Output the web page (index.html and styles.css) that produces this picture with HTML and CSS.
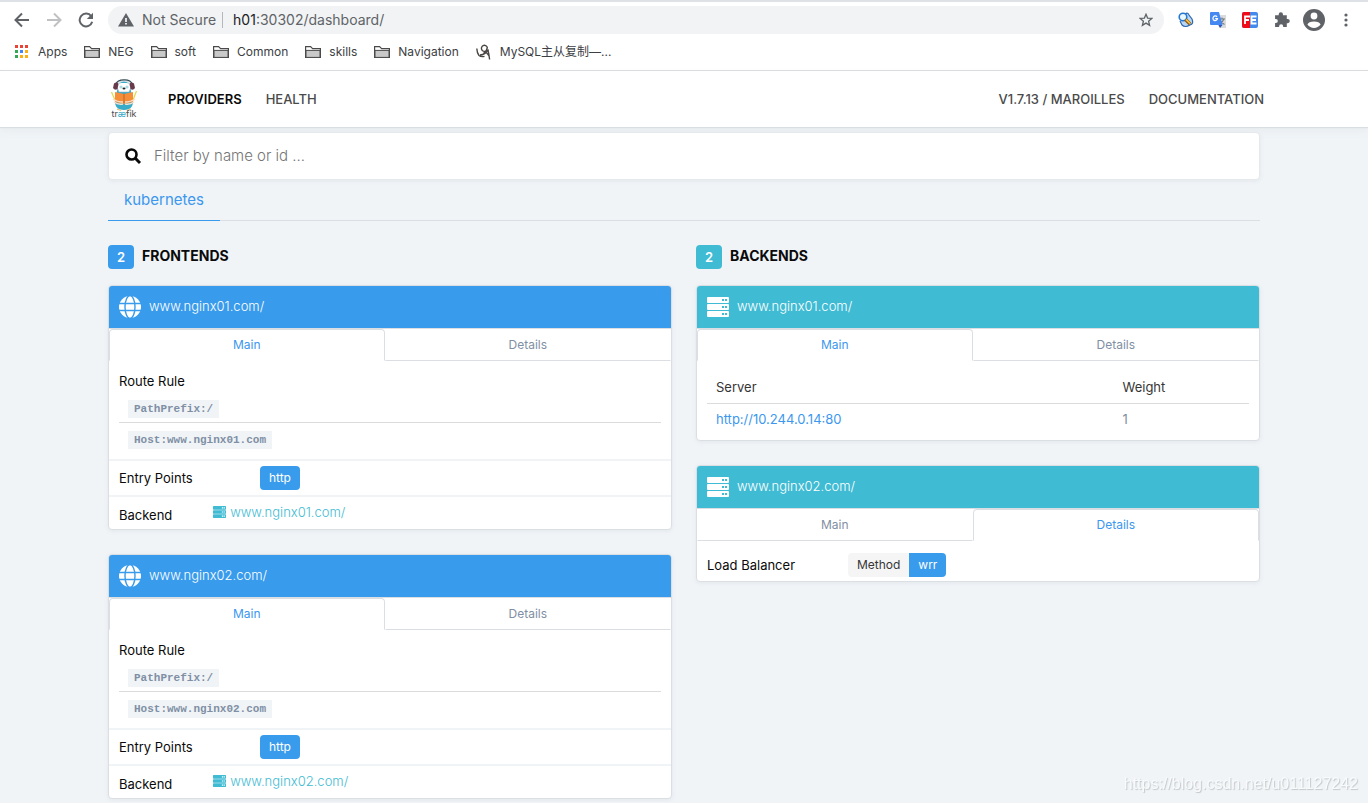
FILE: index.html
```html
<!DOCTYPE html>
<html lang="en">
<head>
<meta charset="utf-8">
<title>Traefik</title>
<link rel="stylesheet" href="styles.css">
</head>
<body>
<svg class="defs" aria-hidden="true">
  <symbol id="folder" viewBox="0 0 16 14">
    <path d="M.6 12.4V1.6H5.6L7.6 3.6H15.4V12.4Z" fill="#fff" stroke="#4a4a4a" stroke-width="1.2"/>
    <path d="M1 5.4H15V12.4H1Z" fill="#c9c9c9" stroke="#4a4a4a"/>
  </symbol>
  <symbol id="globe" viewBox="0 0 22 22">
    <circle cx="11" cy="11" r="11" fill="#fff"/>
    <g fill="none" stroke="#389bec" stroke-width="1.4">
      <ellipse cx="11" cy="11" rx="5" ry="11.4"/>
      <path d="M0 7.5H22M0 14.5H22"/>
    </g>
  </symbol>
  <symbol id="server" viewBox="0 0 22 20">
    <path fill="currentColor" fill-rule="evenodd" d="M1 0H21Q22 0 22 1V5Q22 6 21 6H1Q0 6 0 5V1Q0 0 1 0ZM15 2V4H17V2ZM18 2V4H20V2ZM1 7H21Q22 7 22 8V12Q22 13 21 13H1Q0 13 0 12V8Q0 7 1 7ZM15 9V11H17V9ZM18 9V11H20V9ZM1 14H21Q22 14 22 15V19Q22 20 21 20H1Q0 20 0 19V15Q0 14 1 14ZM15 16V18H17V16ZM18 16V18H20V16Z"/>
  </symbol>
</svg>

<header class="browser">
  <div class="toolbar">
    <div class="history">
      <button class="tool" aria-label="Back"><svg width="16" height="16" viewBox="0 0 16 16"><path d="M15 8H2M8 1.5L1.5 8L8 14.5" fill="none" stroke="#5f6368" stroke-width="2"/></svg></button>
      <button class="tool" aria-label="Forward"><svg width="16" height="16" viewBox="0 0 16 16"><path d="M1 8H14M8 1.5L14.5 8L8 14.5" fill="none" stroke="#bfc1c3" stroke-width="2"/></svg></button>
      <button class="tool" aria-label="Reload"><svg width="16" height="16" viewBox="0 0 16 16"><path d="M13.2 4.2A6.4 6.4 0 1 0 14.2 9.8" fill="none" stroke="#5f6368" stroke-width="2"/><path d="M15 .8V7H8.8Z" fill="#5f6368"/></svg></button>
    </div>
    <div class="address">
      <svg width="16" height="14" viewBox="0 0 16 14"><path d="M8 0L16 13.5H0Z" fill="#5f6368"/><path d="M7.2 5H8.8V9H7.2ZM7.2 10H8.8V11.6H7.2Z" fill="#fff"/></svg>
      <span class="insecure">Not Secure</span>
      <span class="url"><b>h01</b>:30302/dashboard/</span>
      <button class="tool star" aria-label="Bookmark"><svg width="14" height="14" viewBox="0 0 14 14"><path d="M7 1.3L8.6 5.1L12.8 5.4L9.6 8.2L10.6 12.3L7 10.1L3.4 12.3L4.4 8.2L1.2 5.4L5.4 5.1Z" fill="none" stroke="#5f6368" stroke-width="1.3"/></svg></button>
    </div>
    <div class="extensions">
      <button class="tool" aria-label="Search extension"><svg width="16" height="16" viewBox="0 0 16 16"><path d="M7 2Q10 0 11 3L14 7Q16 12 12 13Q7 16 4 13L2 9" fill="#b9d7f5" stroke="#2b67ae" stroke-width="1.2"/><circle cx="5" cy="5" r="3.8" fill="#eaf8ff" stroke="#2679d2" stroke-width="1.6"/><path d="M7.5 7.5L12 12" stroke="#8c5710" stroke-width="3.4"/><path d="M8 7.5L12 11.5" stroke="#ffc43b" stroke-width="1.7"/></svg></button>
      <button class="tool" aria-label="Translate"><svg width="16" height="16" viewBox="0 0 16 16"><path d="M7 3H16V16H10L7 12Z" fill="#d9dbdd"/><path d="M9 7H15M12 5.5V7M13.8 7Q13 10 9.8 12M10.2 8.5Q11.5 11 14.5 12.4" fill="none" stroke="#727b80" stroke-width="1.1"/><path d="M1 0H9L12.5 13H1Q0 13 0 12V1Q0 0 1 0Z" fill="#4688f1"/><path d="M8.5 13H12.5L10 16Z" fill="#2d56b3"/><path d="M7.1 4.9A2.3 2.3 0 1 0 7.5 6.7H5.2" fill="none" stroke="#fff" stroke-width="1.2"/></svg></button>
      <button class="tool" aria-label="FE helper"><svg width="16" height="16" viewBox="0 0 16 16"><rect width="16" height="16" rx="2" fill="#448aec"/><path d="M2 0H8V16H2Q0 16 0 14V2Q0 0 2 0Z" fill="#ed0c18"/><path d="M3 12V4.5H8M3 8H7M14.5 4.5H9.5V11.5H14.5M9.5 8H14" fill="none" stroke="#fff" stroke-width="1.8"/></svg></button>
      <button class="tool" aria-label="Extensions"><svg width="16" height="16" viewBox="0 0 15 15"><path d="M1 3H4.400V2.200A2 2 0 0 1 8.400 2.200V3H12V6.500H12.800A2 2 0 0 1 12.800 10.500H12V14H8.600V13.300A1.900 1.900 0 0 0 4.800 13.300V14H1V10.400H1.700A1.900 1.900 0 0 0 1.700 6.600H1Z" fill="#5f6368"/></svg></button>
      <button class="tool profile" aria-label="Profile"><svg width="22" height="22" viewBox="0 0 22 22"><circle cx="11" cy="11" r="11" fill="#5f6368"/><circle cx="11" cy="7" r="3.4" fill="#fff"/><path d="M4.4 15.6Q5.6 12.4 11 12.4T17.6 15.6Q15 19 11 19T4.400 15.600Z" fill="#fff"/></svg></button>
      <button class="tool" aria-label="Menu"><svg width="4" height="14" viewBox="0 0 4 14"><g fill="#5f6368"><circle cx="2" cy="2" r="1.6"/><circle cx="2" cy="7" r="1.6"/><circle cx="2" cy="12" r="1.6"/></g></svg></button>
    </div>
  </div>
  <nav class="bookmarks" aria-label="Bookmarks">
    <a class="bookmark apps" href="#"><svg width="13" height="13" viewBox="0 0 13 13"><path d="M0 0H3V3H0ZM5 0H8V3H5ZM10 0H13V3H10Z" fill="#ea4335"/><path d="M0 5H3V8H0ZM0 10H3V13H0Z" fill="#34a853"/><path d="M5 5H8V8H5Z" fill="#4285f4"/><path d="M10 5H13V8H10ZM5 10H8V13H5ZM10 10H13V13H10Z" fill="#fbaf17"/></svg>Apps</a>
    <a class="bookmark" href="#"><svg width="16" height="14"><use href="#folder"/></svg>NEG</a>
    <a class="bookmark" href="#"><svg width="16" height="14"><use href="#folder"/></svg>soft</a>
    <a class="bookmark" href="#"><svg width="16" height="14"><use href="#folder"/></svg>Common</a>
    <a class="bookmark" href="#"><svg width="16" height="14"><use href="#folder"/></svg>skills</a>
    <a class="bookmark" href="#"><svg width="16" height="14"><use href="#folder"/></svg>Navigation</a>
    <a class="bookmark" href="#"><svg width="16" height="16" viewBox="0 0 16 16"><path d="M.8 4.500Q1 9 3 11.500Q5 13.200 8.500 12.400M4 11Q9 11 12.500 5.500" fill="none" stroke="#4a4543" stroke-width="1.400"/><path d="M10.500 6.500A3 3 0 1 1 11.300 3.500Q11 7 7.500 9.500M12 6.500Q13 10 13.600 15.500M10.500 9Q12 10 13 12" fill="none" stroke="#4a4543" stroke-width="1.400"/></svg>MySQL主从复制—...</a>
  </nav>
</header>

<nav class="navbar" aria-label="Main">
  <div class="navbar-inner">
    <a class="brand" href="#" aria-label="traefik">
      <svg width="28" height="40" viewBox="0 0 28 40">
        <path d="M1.500 13L5 21M26.500 12L23 21" stroke="#e2d84b" stroke-width="1.200"/>
        <path d="M5 20Q4 31 14 31T23 20L20 8H8Z" fill="#37abc8"/>
        <path d="M7 8Q7 2 14 2T21 8L19 13H9Z" fill="#fff" stroke="#9ab" stroke-width=".5"/>
        <path d="M6 5Q7 1 14 .8T22 5" fill="none" stroke="#344b55" stroke-width="1.200"/>
        <path d="M8 5Q14 0 20 5L17 4H11Z" fill="#37abc8"/>
        <path d="M4 4.500Q7 2.500 8.500 5L7.500 10Q5 12 3 9Z" fill="#67394b"/>
        <path d="M24 4.500Q21 2.500 19.500 5L20.500 10Q23 12 25 9Z" fill="#67394b"/>
        <circle cx="11" cy="8" r="1.600" fill="#a9dce7"/><circle cx="17" cy="8" r="1.600" fill="#a9dce7"/>
        <ellipse cx="14" cy="9.500" rx="1.500" ry="1" fill="#222"/>
        <path d="M5 13L14 15L23 13V23L14 25L5 23Z" fill="#f68d39"/>
        <path d="M14 15V24" stroke="#be642b"/>
        <path d="M3 20Q7 23 13 23M25 20Q21 23 15 23M4 23Q8 26 13 25M24 23Q20 26 15 25" fill="none" stroke="#f7e1cc" stroke-width="1.500"/>
        <path d="M7 30L11 31.500M21 30L17 31.500" stroke="#e9bd70" stroke-width="1.300"/>
        <text x="14" y="38" class="logo-text" text-anchor="middle">tr<tspan class="logo-accent">æ</tspan>fik</text>
      </svg>
    </a>
    <a class="nav-link current" href="#">PROVIDERS</a>
    <a class="nav-link" href="#">HEALTH</a>
    <a class="nav-link version" href="#">V1.7.13 / MAROILLES</a>
    <a class="nav-link" href="#">DOCUMENTATION</a>
  </div>
</nav>

<main class="container">
  <label class="search">
    <svg width="18" height="18" viewBox="0 0 18 18"><circle cx="7.500" cy="7.500" r="5" fill="none" stroke="#0a0a0a" stroke-width="2.600"/><path d="M11.300 11.300L16 16" stroke="#0a0a0a" stroke-width="3"/></svg>
    <input class="search-input" type="text" placeholder="Filter by name or id ..." aria-label="Filter by name or id">
  </label>
  <div class="providers"><a class="provider" href="#">kubernetes</a></div>

  <div class="columns">
    <section>
      <h2 class="heading"><span class="count">2</span><span class="title">FRONTENDS</span></h2>
      <article class="card">
        <h3 class="card-header"><svg width="22" height="22"><use href="#globe"/></svg><span class="name">www.nginx01.com/</span></h3>
        <div class="tabs"><a class="tab active" href="#">Main</a><a class="tab" href="#">Details</a></div>
        <div class="rules">
          <div class="rules-title">Route Rule</div>
          <div class="rule"><code>PathPrefix:/</code></div>
          <div class="rule"><code>Host:www.nginx01.com</code></div>
        </div>
        <div class="row"><span class="label">Entry Points</span><span class="tag">http</span></div>
        <div class="row last"><span class="label narrow">Backend</span><a class="backend" href="#"><svg width="13" height="12"><use href="#server"/></svg>www.nginx01.com/</a></div>
      </article>
      <article class="card">
        <h3 class="card-header"><svg width="22" height="22"><use href="#globe"/></svg><span class="name">www.nginx02.com/</span></h3>
        <div class="tabs"><a class="tab active" href="#">Main</a><a class="tab" href="#">Details</a></div>
        <div class="rules">
          <div class="rules-title">Route Rule</div>
          <div class="rule"><code>PathPrefix:/</code></div>
          <div class="rule"><code>Host:www.nginx02.com</code></div>
        </div>
        <div class="row"><span class="label">Entry Points</span><span class="tag">http</span></div>
        <div class="row last"><span class="label narrow">Backend</span><a class="backend" href="#"><svg width="13" height="12"><use href="#server"/></svg>www.nginx02.com/</a></div>
      </article>
    </section>

    <section class="backends">
      <h2 class="heading"><span class="count">2</span><span class="title">BACKENDS</span></h2>
      <article class="card">
        <h3 class="card-header"><svg width="22" height="20"><use href="#server"/></svg><span class="name">www.nginx01.com/</span></h3>
        <div class="tabs"><a class="tab active" href="#">Main</a><a class="tab" href="#">Details</a></div>
        <div class="servers">
          <table>
            <thead><tr><th class="server-col">Server</th><th>Weight</th></tr></thead>
            <tbody><tr><td><a class="server-link" href="#">http://10.244.0.14:80</a></td><td>1</td></tr></tbody>
          </table>
        </div>
      </article>
      <article class="card">
        <h3 class="card-header"><svg width="22" height="20"><use href="#server"/></svg><span class="name">www.nginx02.com/</span></h3>
        <div class="tabs"><a class="tab" href="#">Main</a><a class="tab active" href="#">Details</a></div>
        <div class="balancer"><span class="label">Load Balancer</span><span class="tag plain">Method</span><span class="tag joined">wrr</span></div>
      </article>
    </section>
  </div>
</main>
<div class="watermark">https://blog.csdn.net/u011127242</div>
</body>
</html>
```
FILE: styles.css
```css
* { box-sizing: border-box; }

body {
  margin: 0;
  background: #f0f4f7;
  color: #0a0a0a;
  font: 13px/20px Inter, "Noto Sans CJK SC", sans-serif;
}

a { color: inherit; text-decoration: none; }
svg { flex: none; display: block; }
.defs { position: absolute; width: 0; height: 0; }

/* Browser bar */
.browser {
  height: 71px;
  background: #fff;
  border-top: 2px solid #dee1e6;
  border-bottom: 1px solid #d8d9dc;
}
.toolbar { display: flex; align-items: center; padding: 4px 20px 0 14px; }
.history { display: flex; gap: 16px; width: 94px; }
.tool { display: flex; padding: 0; border: 0; background: none; }
.address {
  flex: 1;
  display: flex;
  align-items: center;
  height: 28px;
  padding: 0 11px 0 10px;
  border-radius: 14px;
  background: #f1f3f4;
  color: #5f6368;
  font-size: 14px;
}
.insecure { margin-left: 8px; padding-right: 6px; border-right: 1px solid #b5b8bb; line-height: 16px; }
.url { margin-left: 10px; }
.url b { font-weight: 400; color: #202124; }
.star { margin-left: auto; }
.extensions { display: flex; align-items: center; gap: 16px; margin-left: 14px; }
.profile { margin: 0 3px 0 -3px; }
.bookmarks {
  display: flex;
  align-items: center;
  gap: 17px;
  height: 35px;
  padding-left: 15px;
  color: #3c4043;
  font-size: 12px;
}
.bookmark { display: flex; align-items: center; gap: 8px; }
.apps { gap: 10px; }

/* Site navigation */
.navbar { background: #fff; box-shadow: 0 1px 1px #d9dee2, 0 4px 8px #e8ecef; }
.navbar-inner { display: flex; align-items: center; height: 56px; max-width: 1184px; margin: 0 auto; padding-left: 18px; }
.brand { margin-right: 18px; }
.logo-text { font: 9px Inter, sans-serif; fill: #4b4b4b; }
.logo-accent { fill: #37abc8; }
.nav-link { padding: 0 12px; color: #4a4a4a; font-weight: 500; }
.current { color: #0a0a0a; font-weight: 600; }
.version { margin-left: auto; }

/* Page */
.container { max-width: 1152px; margin: 0 auto; padding-top: 5px; }
.search {
  position: relative;
  display: flex;
  align-items: center;
  gap: 12px;
  height: 48px;
  padding: 0 15px;
  border: 1px solid #e5e9ec;
  border-radius: 4px;
  background: #fff;
  box-shadow: 0 1px 4px #e2e7eb;
}
.search-input { flex: 1; border: 0; padding: 0; outline: 0; background: none; font: 300 15px/24px Inter, sans-serif; }
.search-input::placeholder { color: #757575; opacity: 1; }
.providers { display: flex; border-bottom: 1px solid #dbdfe3; }
.provider { padding: 8px 16px; margin-bottom: -1px; border-bottom: 1px solid #389bec; color: #3c97ee; font-size: 15px; line-height: 24px; }
.columns { display: grid; grid-template-columns: 1fr 1fr; gap: 24px; padding-top: 24px; }
.heading { display: flex; align-items: center; gap: 8px; margin: 0 0 16px; font-size: 14px; line-height: 24px; font-weight: 600; }
.title { font-weight: 700; line-height: 22px; padding-bottom: 2px; }
.count { width: 26px; border-radius: 4px; background: #389bec; color: #fff; font-size: 13px; text-align: center; }

/* Cards */
.card {
  margin-bottom: 24px;
  border: 1px solid #dbdfe3;
  border-radius: 4px;
  background: #fff;
  box-shadow: 0 1px 4px #e2e7eb;
  overflow: hidden;
}
.card-header {
  display: flex;
  align-items: center;
  gap: 8px;
  height: 42px;
  margin: 0;
  padding: 0 10px;
  background: #389bec;
  color: #fff;
  font-size: 13px;
  font-weight: 300;
}
.name { padding-bottom: 3px; }
.backends .count, .backends .card-header { background: #3fbbd3; }
.tabs { display: flex; border-top: 1px solid #dbdfe3; font-size: 12px; }
.tab {
  flex: 1 1 auto;
  padding: 5px 12px;
  border: 1px solid transparent;
  border-bottom-color: #dbdfe3;
  color: #7f8fa4;
  text-align: center;
}
.active { border-color: #dbdfe3; border-bottom-color: #fff; border-radius: 4px 4px 0 0; color: #3c97ee; }
.rules { padding: 10px 10px 6px; }
.rule { display: flex; padding: 8px 9px 4px; }
.rule + .rule { border-top: 1px solid #dbdbdb; }
.rules-title { margin-bottom: 1px; }
code { padding: 0 6px; background: #f0f4f7; color: #7f8fa4; font: 700 11px/18px "Liberation Mono", monospace; }
.row { display: flex; align-items: center; min-height: 36px; padding: 0 10px; border-top: 2px solid #f0f4f7; }
.last { min-height: 34px; }
.label { flex: 0 0 26%; }
.narrow { flex-basis: 17%; padding-top: 3px; }
.tag { padding: 0 9px; border-radius: 4px; background: #389bec; color: #fff; font-size: 12px; line-height: 24px; }
.plain { border-radius: 4px 0 0 4px; background: #f5f5f5; color: #363636; }
.joined { border-radius: 0 4px 4px 0; }
.backend { display: flex; align-items: center; gap: 4px; padding: 0 2px 3px; color: #3fbbd3; font-weight: 300; }
.servers { padding: 10px 10px 4px; }
table { width: 100%; border-collapse: collapse; }
th, td { padding: 6px 9px; font-weight: 400; text-align: left; }
th { color: #363636; border-bottom: 1px solid #dbdbdb; }
td { padding: 5px 9px 7px; color: #7f8fa4; }
.server-col { width: 75%; }
.server-link { color: #3c97ee; }
.balancer { display: flex; align-items: center; padding: 12px 10px 4px; }

.watermark {
  position: fixed;
  right: 10px;
  bottom: 9px;
  color: #f8fafb;
  font: 16px/20px "Liberation Sans", sans-serif;
  text-shadow: 1px 1px 1px #c3c7ca;
}
```
